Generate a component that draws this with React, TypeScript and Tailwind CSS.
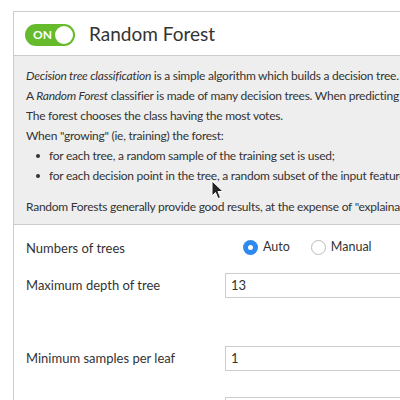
import React from "react";

function Cursor() {
  return (
    <svg className="absolute left-[211px] top-[180px]" width="14" height="20" viewBox="0 0 14 20">
      <path d="M1 1 L1 16 L4.5 12.5 L7 18.5 L9.5 17.5 L7 11.5 L12 11.5 Z" fill="#222" stroke="#fff" strokeWidth="1" strokeLinejoin="round" />
    </svg>
  );
}

export default function App() {
  return (
    <div className="relative w-[400px] h-[400px] overflow-hidden bg-white text-[#333]" style={{ fontFamily: "Lato, 'Noto Sans', sans-serif" }}>
      <div className="ml-[13px] mt-[11px] w-[800px] border-l border-t border-[#cccccc]">
        <div className="flex items-center h-[44px] pl-[11px] border-b border-[#cccccc]">
          <div className="relative w-[50px] h-[22px] mt-[2px] rounded-full bg-[#66bb2c] flex items-center">
            <span className="ml-[8px] text-white text-[12px] font-bold">ON</span>
            <span className="absolute right-[2px] top-[2px] w-[18px] h-[18px] rounded-full bg-white" />
          </div>
          <span className="ml-[14px] mt-[2px] text-[19px] text-[#333]">Random Forest</span>
        </div>
        <div className="bg-[#eeeeee] border-b border-[#cccccc] pl-[12px] pt-[10px] pb-[7px] text-[12px] tracking-[-0.25px] leading-[20px] whitespace-nowrap">
          <div><i>Decision tree classification</i> is a simple algorithm which builds a decision tree. Each node of the decision tree includes a condition on one of the input features.</div>
          <div>A <i>Random Forest</i> classifier is made of many decision trees. When predicting a new record, it is predicted by each tree, and each tree "votes" for the final answer of the forest.</div>
          <div>The forest chooses the class having the most votes.</div>
          <div>When "growing" (ie, training) the forest:</div>
          <ul className="mb-[11px]">
            <li className="flex items-center"><span className="ml-[10px] mr-[9px] w-[4px] h-[4px] rounded-full bg-[#333]" />for each tree, a random sample of the training set is used;</li>
            <li className="flex items-center"><span className="ml-[10px] mr-[9px] w-[4px] h-[4px] rounded-full bg-[#333]" />for each decision point in the tree, a random subset of the input features is considered.</li>
          </ul>
          <div>Random Forests generally provide good results, at the expense of "explainability" of the model.</div>
        </div>
        <div className="pl-[12px] pt-[12px] text-[13px]">
          <div className="flex items-center h-[24px]">
            <span className="w-[199px]">Numbers of trees</span>
            <div className="flex items-center -mt-[3px] ml-[18px] text-[12.5px]">
              <span className="w-[15px] h-[15px] rounded-full bg-[#2f8af0] flex items-center justify-center">
                <span className="w-[5px] h-[5px] rounded-full bg-white" />
              </span>
              <span className="ml-[5px]">Auto</span>
              <span className="ml-[21px] w-[15px] h-[15px] rounded-full border border-[#bbbbbb] bg-white" />
              <span className="ml-[5px]">Manual</span>
            </div>
          </div>
          <div className="flex items-center h-[25px] mt-[12px]">
            <span className="w-[199px]">Maximum depth of tree</span>
            <div className="w-[300px] h-[25px] border border-[#cccccc] flex items-center pl-[5px] text-[13px]">13</div>
          </div>
          <div className="flex items-center h-[25px] mt-[48px]">
            <span className="w-[199px]">Minimum samples per leaf</span>
            <div className="w-[300px] h-[25px] border border-[#cccccc] flex items-center pl-[5px] text-[13px]">1</div>
          </div>
          <div className="flex items-center h-[25px] mt-[26px]">
            <span className="w-[199px]"></span>
            <div className="w-[300px] h-[25px] border border-[#cccccc]" />
          </div>
        </div>
      </div>
      <Cursor />
    </div>
  );
}
